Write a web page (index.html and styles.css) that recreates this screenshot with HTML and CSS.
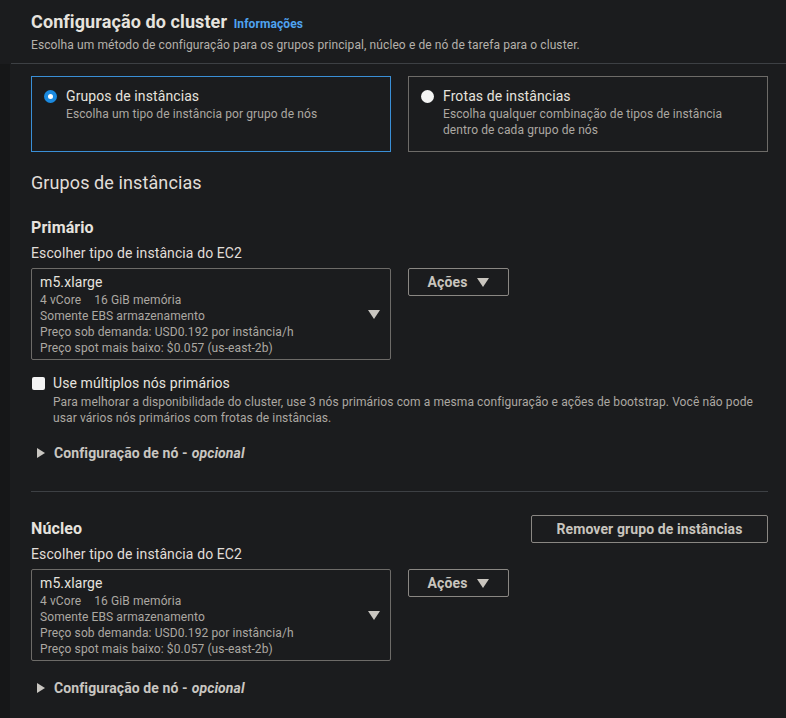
FILE: index.html
```html
<!DOCTYPE html>
<html lang="pt">
<head>
<meta charset="utf-8">
<title>Configuração do cluster</title>
<link rel="stylesheet" href="styles.css">
</head>
<body>
<header class="header">
  <h1 class="title">Configuração do cluster <a class="info" href="#">Informações</a></h1>
  <p class="subtitle">Escolha um método de configuração para os grupos principal, núcleo e de nó de tarefa para o cluster.</p>
</header>
<main class="content">
  <div class="tiles">
    <div class="tile selected">
      <span class="radio on"></span>
      <div>
        <div class="tile-label">Grupos de instâncias</div>
        <div class="tile-desc">Escolha um tipo de instância por grupo de nós</div>
      </div>
    </div>
    <div class="tile">
      <span class="radio"></span>
      <div>
        <div class="tile-label">Frotas de instâncias</div>
        <div class="tile-desc">Escolha qualquer combinação de tipos de instância<br>dentro de cada grupo de nós</div>
      </div>
    </div>
  </div>

  <h2 class="section-title">Grupos de instâncias</h2>

  <section class="group">
    <div class="group-head">
      <h3 class="group-title">Primário</h3>
    </div>
    <div class="field-label">Escolher tipo de instância do EC2</div>
    <div class="select-row">
      <div class="select">
        <div class="sel-main">m5.xlarge</div>
        <div class="sel-line">4 vCore<span class="sp"></span>16 GiB memória</div>
        <div class="sel-line">Somente EBS armazenamento</div>
        <div class="sel-line">Preço sob demanda: USD0.192 por instância/h</div>
        <div class="sel-line">Preço spot mais baixo: $0.057 (us-east-2b)</div>
        <span class="caret"></span>
      </div>
      <button class="btn">Ações <span class="btn-caret"></span></button>
    </div>
    <div class="check-row">
      <span class="checkbox"></span>
      <div>
        <div class="check-label">Use múltiplos nós primários</div>
        <div class="check-desc">Para melhorar a disponibilidade do cluster, use 3 nós primários com a mesma configuração e ações de bootstrap. Você não pode usar vários nós primários com frotas de instâncias.</div>
      </div>
    </div>
    <div class="expander"><span class="exp-caret"></span>Configuração de nó - <em>opcional</em></div>
  </section>

  <hr class="divider">

  <section class="group">
    <div class="group-head">
      <h3 class="group-title">Núcleo</h3>
      <button class="btn wide">Remover grupo de instâncias</button>
    </div>
    <div class="field-label tight">Escolher tipo de instância do EC2</div>
    <div class="select-row">
      <div class="select">
        <div class="sel-main">m5.xlarge</div>
        <div class="sel-line">4 vCore<span class="sp"></span>16 GiB memória</div>
        <div class="sel-line">Somente EBS armazenamento</div>
        <div class="sel-line">Preço sob demanda: USD0.192 por instância/h</div>
        <div class="sel-line">Preço spot mais baixo: $0.057 (us-east-2b)</div>
        <span class="caret"></span>
      </div>
      <button class="btn">Ações <span class="btn-caret"></span></button>
    </div>
    <div class="expander"><span class="exp-caret"></span>Configuração de nó - <em>opcional</em></div>
  </section>
</main>
</body>
</html>
```

FILE: styles.css
```css
* { box-sizing: border-box; }
html, body { margin: 0; padding: 0; }
body {
  background: #161718;
  font-family: Roboto, "Noto Sans", "Liberation Sans", sans-serif;
  letter-spacing: 0.1px;
  color: #e1ded9;
  height: 718px;
  overflow: hidden;
}
.header {
  background: #1b1c1e;
  padding: 10px 18px 0 31px;
  height: 64px;
  position: relative;
}
.header::after {
  content: "";
  position: absolute;
  left: 11px; right: 0; bottom: 0;
  height: 1px;
  background: #3d4044;
}
.title {
  margin: 0;
  font-size: 18px;
  line-height: 24px;
  font-weight: 700;
  color: #e6e3de;
}
.info {
  font-size: 12px;
  font-weight: 700;
  color: #4fa3f0;
  text-decoration: none;
  margin-left: 2px;
}
.subtitle {
  margin: 1px 0 0;
  font-size: 12px;
  line-height: 16px;
  color: #b5b1ab;
}
.content {
  margin-left: 10px;
  background: #1b1c1e;
  padding: 12px 18px 40px 21px;
  height: 654px;
}
.tiles {
  display: grid;
  grid-template-columns: 360px 360px;
  column-gap: 17px;
}
.tile {
  display: flex;
  align-items: flex-start;
  gap: 9px;
  border: 1px solid #6d6b68;
  height: 76px;
  padding: 9px 12px;
}
.tile.selected { border-color: #3a8fd6; }
.radio {
  width: 13px; height: 13px;
  border-radius: 50%;
  background: #f4f4f4;
  margin-top: 4px;
  flex: none;
  position: relative;
}
.radio.on { background: #1b8ae0; }
.radio.on::after {
  content: "";
  position: absolute;
  left: 4px; top: 4px;
  width: 5px; height: 5px;
  border-radius: 50%;
  background: #ffffff;
}
.tile-label { font-size: 14px; line-height: 20px; color: #e6e3de; }
.tile-desc { font-size: 12px; line-height: 16px; color: #aca8a2; }

.section-title {
  margin: 19px 0 0;
  font-size: 18px;
  line-height: 24px;
  font-weight: 400;
  color: #e1ded9;
}
.group { margin-top: 22px; }
.group-head {
  display: flex;
  justify-content: space-between;
  align-items: center;
}
.group-title {
  margin: 0;
  font-size: 16px;
  line-height: 22px;
  font-weight: 700;
  color: #e6e3de;
}
.field-label {
  margin-top: 4px;
  font-size: 14px;
  line-height: 20px;
  color: #e1ded9;
}
.field-label.tight { margin-top: 1px; }
.select-row {
  display: flex;
  align-items: flex-start;
  gap: 17px;
  margin-top: 5px;
}
.select {
  width: 360px;
  height: 92px;
  border: 1px solid #6d6b68;
  border-radius: 2px;
  padding: 3px 10px 2px 8px;
  position: relative;
}
.sel-main { font-size: 14px; line-height: 20px; color: #e6e3de; }
.sel-line { font-size: 12px; line-height: 16px; color: #aca8a2; }
.sp { display: inline-block; width: 13px; }
.caret {
  position: absolute;
  right: 10px;
  top: 41px;
  width: 0; height: 0;
  border-left: 6px solid transparent;
  border-right: 6px solid transparent;
  border-top: 9px solid #c9c6c1;
}
.btn {
  background: #1b1c1e;
  border: 1px solid #8a8783;
  border-radius: 2px;
  color: #c9c5be;
  font-family: inherit;
  letter-spacing: 0.1px;
  font-size: 14px;
  font-weight: 700;
  height: 28px;
  width: 101px;
  padding: 0;
  display: flex;
  align-items: center;
  justify-content: center;
  gap: 10px;
}
.btn.wide { width: 237px; }
.btn-caret {
  width: 0; height: 0;
  border-left: 6px solid transparent;
  border-right: 6px solid transparent;
  border-top: 9px solid #c9c5be;
}
.check-row {
  display: flex;
  align-items: flex-start;
  gap: 8px;
  margin-top: 16px;
  padding-left: 1px;
}
.checkbox {
  width: 13px; height: 13px;
  background: #f4f4f4;
  border-radius: 2px;
  margin-top: 1px;
  flex: none;
}
.check-label {
  font-size: 14px; line-height: 14px; color: #e6e3de;
}
.check-desc {
  max-width: 705px;
  margin-top: 4px;
  font-size: 12px; line-height: 16px; color: #aca8a2;
}
.expander {
  display: flex;
  align-items: center;
  margin-top: 17px;
  font-size: 14px;
  line-height: 20px;
  font-weight: 700;
  color: #c9c6c1;
  padding-left: 6px;
}
.expander em { font-style: italic; margin-left: 4px; }
.exp-caret {
  width: 0; height: 0;
  border-top: 5px solid transparent;
  border-bottom: 5px solid transparent;
  border-left: 8px solid #c9c6c1;
  margin-right: 9px;
}
.divider {
  border: 0;
  height: 1px;
  background: #3d4044;
  margin: 28px 0 0;
}
.divider + .group { margin-top: 23px; }
```
